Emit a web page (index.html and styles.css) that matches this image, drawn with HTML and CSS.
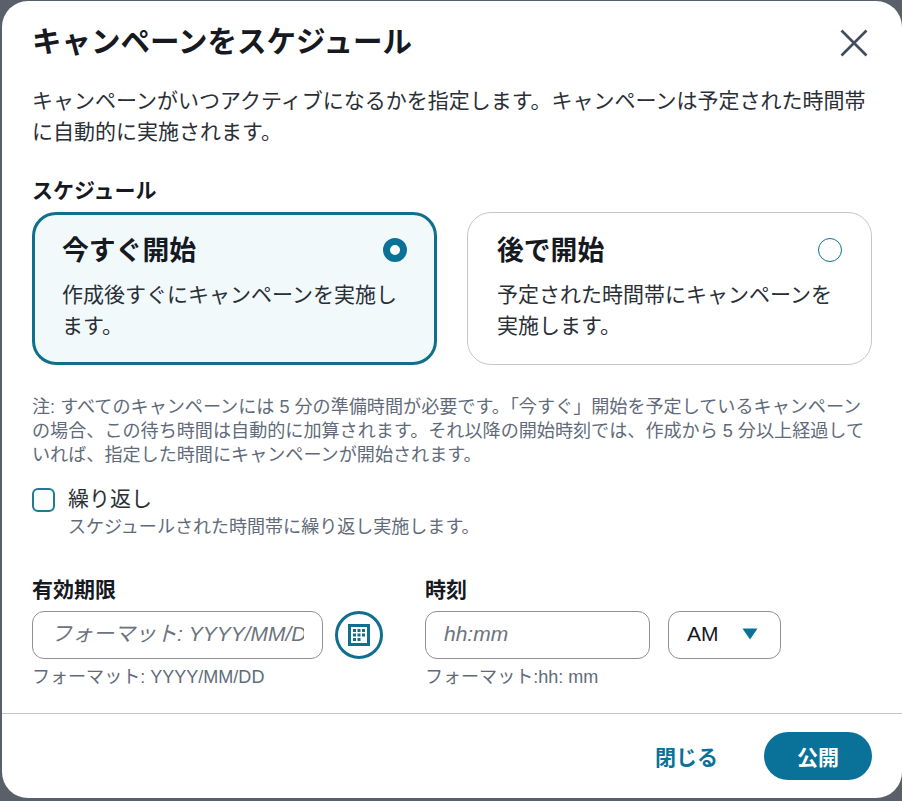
FILE: index.html
```html
<!DOCTYPE html>
<html lang="ja">
<head>
<meta charset="utf-8" />
<title>キャンペーンをスケジュール</title>
<link rel="stylesheet" href="styles.css">
</head>
<body>
<div class="modal">
	<div class="modalBody">
		<div class="modalHead">
			<h1 class="modalTitle">キャンペーンをスケジュール</h1>
			<button class="closeBtn" aria-label="閉じる">
				<svg width="28" height="28" viewBox="0 0 28 28"><path d="M1.5 1.5L26.5 26.5M26.5 1.5L1.5 26.5" stroke="#414d5c" stroke-width="2.6" fill="none"/></svg>
			</button>
		</div>
		<p class="lead">キャンペーンがいつアクティブになるかを指定します。キャンペーンは予定された時間帯に自動的に実施されます。</p>
		<div class="sectionLabel">スケジュール</div>
		<div class="cards">
			<div class="card cardOn">
				<div class="cardHead">
					<span class="cardTitle">今すぐ開始</span>
					<span class="radio radioOn"></span>
				</div>
				<p class="cardText">作成後すぐにキャンペーンを実施します。</p>
			</div>
			<div class="card">
				<div class="cardHead">
					<span class="cardTitle">後で開始</span>
					<span class="radio"></span>
				</div>
				<p class="cardText">予定された時間帯にキャンペーンを実施します。</p>
			</div>
		</div>
		<p class="note">注: すべてのキャンペーンには 5 分の準備時間が必要です。「今すぐ」開始を予定しているキャンペーンの場合、この待ち時間は自動的に加算されます。それ以降の開始時刻では、作成から 5 分以上経過していれば、指定した時間にキャンペーンが開始されます。</p>
		<div class="repeat">
			<span class="checkbox"></span>
			<div>
				<div class="repeatLabel">繰り返し</div>
				<div class="repeatHint">スケジュールされた時間帯に繰り返し実施します。</div>
			</div>
		</div>
		<div class="fields">
			<div class="field">
				<label class="fieldLabel">有効期限</label>
				<div class="fieldRow">
					<input class="textInput dateInput" type="text" placeholder="フォーマット: YYYY/MM/DD">
					<button class="calBtn" aria-label="カレンダー">
						<svg width="22" height="22" viewBox="0 0 22 22">
							<rect width="22" height="22" fill="#0f6f8c"/>
							<rect x="3" y="3" width="16" height="16" fill="#fff"/>
							<path d="M5 5h3v3H5zM9.5 5h3v3h-3zM14 5h3v3h-3zM5 9.5h3v3H5zM9.5 9.5h3v3h-3zM14 9.5h3v3h-3zM5 14h3v3H5zM9.5 14h3v3h-3z" fill="#0f6f8c"/>
						</svg>
					</button>
				</div>
				<div class="fieldHint">フォーマット: YYYY/MM/DD</div>
			</div>
			<div class="field">
				<label class="fieldLabel">時刻</label>
				<div class="fieldRow">
					<input class="textInput timeInput" type="text" placeholder="hh:mm">
					<div class="ampm">
						<span>AM</span>
						<svg width="16" height="12" viewBox="0 0 16 12"><path d="M0.5 0.5H15.5L8 11.5Z" fill="#0a7299"/></svg>
					</div>
				</div>
				<div class="fieldHint">フォーマット:hh: mm</div>
			</div>
		</div>
	</div>
	<div class="modalFoot">
		<button class="linkBtn">閉じる</button>
		<button class="primaryBtn">公開</button>
	</div>
</div>
</body>
</html>
```

FILE: styles.css
```css
html, body { height: 100%; }
body { margin: 0; background: #5a6069; font-family: "Liberation Sans", "Noto Sans CJK JP", sans-serif; color: #16191f; overflow: hidden; }
button { font-family: inherit; cursor: pointer; }
p { margin: 0; }

.modal { box-sizing: border-box; width: 900px; height: 797px; margin: 1px 0 0 2px; background: #fff; border-radius: 26px; display: flex; flex-direction: column; }
.modalBody { flex: 1; padding: 0 30px; }

.modalHead { display: flex; justify-content: space-between; align-items: center; height: 84px; }
.modalTitle { margin: 0 0 2px; font-size: 29.5px; line-height: 82px; font-weight: 700; }
.closeBtn { width: 28px; height: 28px; padding: 0; border: 0; background: none; margin-right: 4px; display: flex; }

.lead { font-size: 21px; line-height: 31px; color: #2a2f36; }

.sectionLabel { margin-top: 30px; font-size: 21px; line-height: 28px; font-weight: 700; }

.cards { display: grid; grid-template-columns: 405px 405px; gap: 30px; margin-top: 7px; }
.card { box-sizing: border-box; height: 153px; border: 1px solid #c4c7cb; border-radius: 24px; padding: 17px 29px 0 29px; }
.cardOn { border: 3px solid #0f6f8c; background: #f1f9fb; padding: 15px 27px 0 27px; }
.cardHead { display: flex; justify-content: space-between; align-items: center; height: 40px; }
.cardTitle { font-size: 26.8px; font-weight: 700; margin-bottom: 4px; }
.cardText { margin-top: 9px; font-size: 21px; line-height: 31px; color: #2a2f36; }

.radio { box-sizing: border-box; width: 24px; height: 24px; border: 1.5px solid #0f6f8c; border-radius: 50%; background: #fff; }
.radioOn { border: 7px solid #0a7299; }

.note { margin-top: 30px; font-size: 18.1px; line-height: 24px; color: #5f6b7a; }

.repeat { display: flex; gap: 13px; margin-top: 19px; }
.checkbox { box-sizing: border-box; width: 23px; height: 24px; margin-top: 2px; border: 2px solid #1f7a94; border-radius: 6px; background: #fbfdfe; }
.repeatLabel { margin-bottom: 2px; font-size: 21px; line-height: 26px; color: #2a2f36; }
.repeatHint { font-size: 18.05px; line-height: 26px; color: #5f6b7a; }

.fields { display: flex; gap: 42px; margin-top: 36px; }
.fieldLabel { display: block; font-size: 21px; line-height: 28px; font-weight: 700; }
.fieldRow { display: flex; gap: 12px; margin-top: 7px; }
.fieldHint { margin-top: 6px; font-size: 18.05px; line-height: 24px; color: #5f6b7a; }

.textInput { box-sizing: border-box; height: 48px; border: 1px solid #8d9096; border-radius: 12px; background: #fff; font-family: inherit; font-size: 21px; font-style: italic; color: #16191f; outline: none; }
.textInput::placeholder { color: #6c737d; opacity: 1; }
.dateInput { width: 291px; padding: 0 18px 2px 18px; }
.timeInput { width: 225px; padding: 0 18px 2px; margin-right: 6px; }

.calBtn { box-sizing: border-box; width: 48px; height: 48px; padding: 0; border: 3px solid #0f6f8c; border-radius: 50%; background: #fff; display: flex; align-items: center; justify-content: center; }

.ampm { box-sizing: border-box; width: 113px; height: 48px; border: 1px solid #8d9096; border-radius: 12px; padding: 0 22px 2px 18px; display: flex; align-items: center; justify-content: space-between; font-size: 21px; }

.modalFoot { box-sizing: border-box; height: 85px; border-top: 1px solid #c4c7cb; padding: 18px 30px 0 0; display: flex; justify-content: flex-end; align-items: flex-start; gap: 46px; }
.linkBtn { height: 48px; padding: 0; border: 0; background: none; color: #0a7299; font-size: 21px; font-weight: 700; }
.primaryBtn { width: 108px; height: 48px; padding: 0; border: 0; border-radius: 24px; background: #0a7299; color: #fff; font-size: 21px; font-weight: 700; }
```
